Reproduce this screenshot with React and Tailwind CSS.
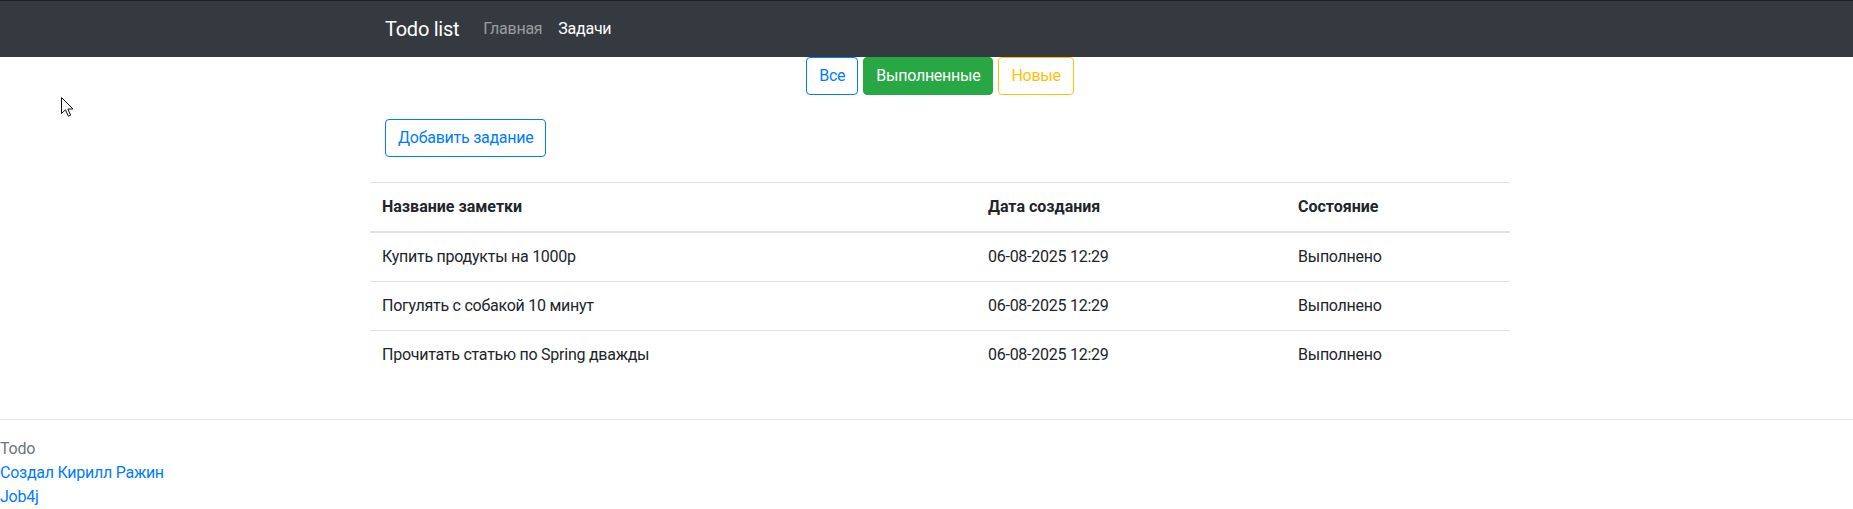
import React from 'react';

const tasks = [
    { id: 1, title: 'Купить продукты на 1000р', created: '06-08-2025 12:29', done: true },
    { id: 2, title: 'Погулять с собакой 10 минут', created: '06-08-2025 12:29', done: true },
    { id: 3, title: 'Прочитать статью по Spring дважды', created: '06-08-2025 12:29', done: true },
];

const Cursor = () => (
    <svg className="absolute left-[61px] top-[97px]" width="13" height="20" viewBox="0 0 13 20">
        <path d="M0.5 0.5 L0.5 16.5 L4.5 12.8 L7.3 19.2 L9.6 18.2 L6.9 12 L12 12 Z" fill="#fff" stroke="#111" strokeWidth="1" strokeLinejoin="round" />
    </svg>
);

const App = () => {
    return (
        <div className="min-h-screen w-full overflow-hidden bg-white text-base tracking-[-0.016em] text-[#212529] font-['Segoe_UI',Roboto,'Liberation_Sans',sans-serif]">
            <div className="relative w-[1880px]">
                <Cursor />

                {/* Navbar */}
                <nav className="border-t border-[#1d1f21] bg-[#343a40]">
                    <div className="mx-auto flex h-[56px] w-[1140px] items-center px-[15px]">
                        <span className="mr-4 text-xl leading-[30px] text-white">Todo list</span>
                        <span className="px-2 leading-6 text-white/50">Главная</span>
                        <span className="px-2 leading-6 text-white">Задачи</span>
                    </div>
                </nav>

                {/* Filters */}
                <div className="flex justify-center gap-[5px]">
                    <button className="rounded border border-[#007bff] bg-white px-3 py-[6px] leading-6 text-[#007bff]">Все</button>
                    <button className="rounded border border-[#28a745] bg-[#28a745] px-3 py-[6px] leading-6 text-white">Выполненные</button>
                    <button className="rounded border border-[#ffc107] bg-white px-3 py-[6px] leading-6 text-[#ffc107]">Новые</button>
                </div>

                <div className="mx-auto w-[1140px]">
                    <div className="mt-6 px-[15px]">
                        <button className="rounded border border-[#007bff] bg-white px-3 py-[6px] leading-6 text-[#007bff]">Добавить задание</button>
                    </div>

                    <table className="mt-[25px] w-full border-collapse text-left">
                        <thead>
                            <tr className="border-t border-b-2 border-[#dee2e6]">
                                <th className="w-[606px] p-3 font-bold leading-6 tracking-normal">Название заметки</th>
                                <th className="w-[310px] p-3 font-bold leading-6 tracking-normal">Дата создания</th>
                                <th className="p-3 font-bold leading-6 tracking-normal">Состояние</th>
                            </tr>
                        </thead>
                        <tbody>
                            {tasks.map((t, i) => (
                                <tr key={t.id} className={i > 0 ? 'border-t border-[#dee2e6]' : ''}>
                                    <td className="p-3 leading-6">{t.title}</td>
                                    <td className="p-3 leading-6">{t.created}</td>
                                    <td className="p-3 leading-6">{t.done ? 'Выполнено' : 'Новое'}</td>
                                </tr>
                            ))}
                        </tbody>
                    </table>
                </div>
            </div>

            {/* Footer */}
            <footer className="mt-10 border-t border-[#e5e5e5] pt-[17px] leading-6">
                <div className="text-[#6c757d]">Todo</div>
                <div className="text-[#007bff]">Создал Кирилл Ражин</div>
                <div className="text-[#007bff]">Job4j</div>
            </footer>
        </div>
    );
};

export default App;
